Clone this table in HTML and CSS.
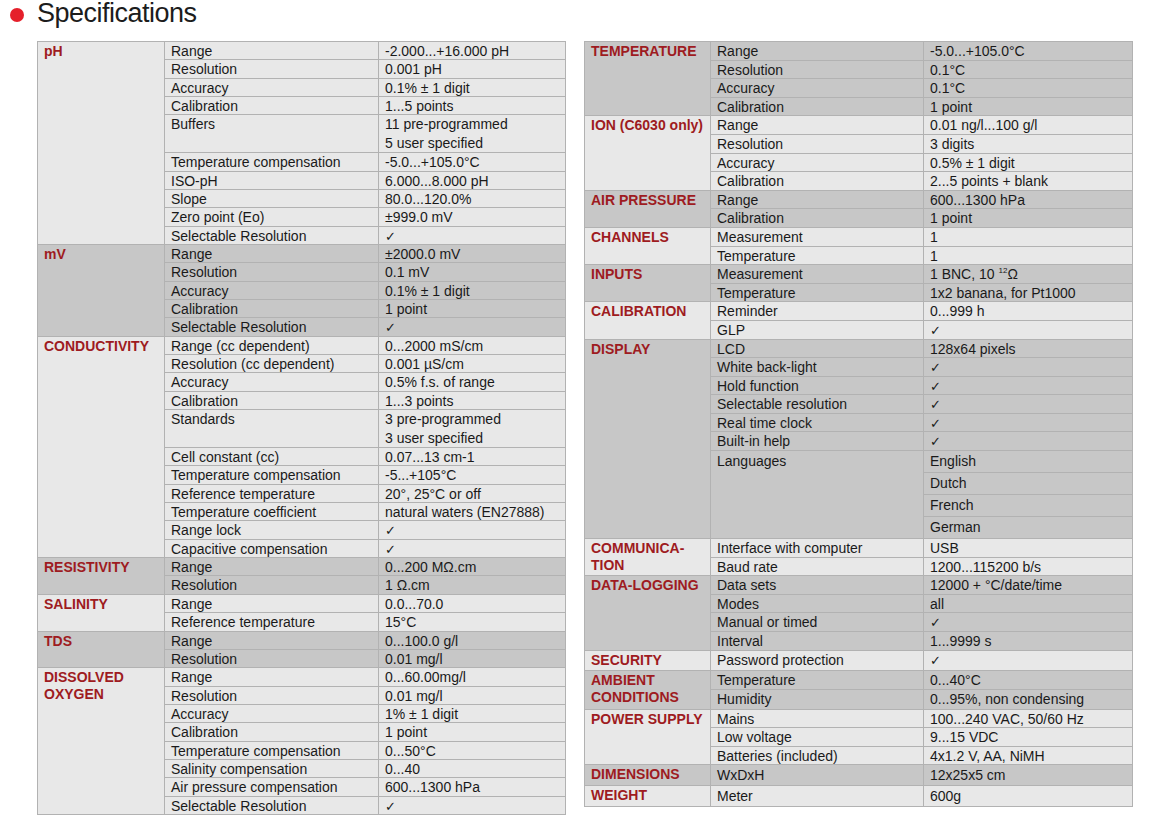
FILE: index.html
```html
<!DOCTYPE html>
<html lang="en">
<head>
<meta charset="utf-8">
<title>Specifications</title>
<link rel="stylesheet" href="styles.css">
</head>
<body>
<div class="page">
  <h2 class="title"><span class="dot"></span>Specifications</h2>
  <div class="tables">
    <div class="spec spec-left">
      <div class="band">
        <div class="g s11">pH</div>
        <div class="p">Range</div><div class="v">-2.000...+16.000 pH</div>
        <div class="p">Resolution</div><div class="v">0.001 pH</div>
        <div class="p">Accuracy</div><div class="v">0.1% ± 1 digit</div>
        <div class="p">Calibration</div><div class="v">1...5 points</div>
        <div class="p s2 two">Buffers</div><div class="v s2 two">11 pre-programmed<br>5 user specified</div>
        <div class="p">Temperature compensation</div><div class="v">-5.0...+105.0°C</div>
        <div class="p">ISO-pH</div><div class="v">6.000...8.000 pH</div>
        <div class="p">Slope</div><div class="v">80.0...120.0%</div>
        <div class="p">Zero point (Eo)</div><div class="v">±999.0 mV</div>
        <div class="p">Selectable Resolution</div><div class="v"><span class="check">✓</span></div>
      </div>
      <div class="band dark">
        <div class="g s5">mV</div>
        <div class="p">Range</div><div class="v">±2000.0 mV</div>
        <div class="p">Resolution</div><div class="v">0.1 mV</div>
        <div class="p">Accuracy</div><div class="v">0.1% ± 1 digit</div>
        <div class="p">Calibration</div><div class="v">1 point</div>
        <div class="p">Selectable Resolution</div><div class="v"><span class="check">✓</span></div>
      </div>
      <div class="band">
        <div class="g s12">CONDUCTIVITY</div>
        <div class="p">Range (cc dependent)</div><div class="v">0...2000 mS/cm</div>
        <div class="p">Resolution (cc dependent)</div><div class="v">0.001 µS/cm</div>
        <div class="p">Accuracy</div><div class="v">0.5% f.s. of range</div>
        <div class="p">Calibration</div><div class="v">1...3 points</div>
        <div class="p s2 two">Standards</div><div class="v s2 two">3 pre-programmed<br>3 user specified</div>
        <div class="p">Cell constant (cc)</div><div class="v">0.07...13 cm-1</div>
        <div class="p">Temperature compensation</div><div class="v">-5...+105°C</div>
        <div class="p">Reference temperature</div><div class="v">20°, 25°C or off</div>
        <div class="p">Temperature coefficient</div><div class="v">natural waters (EN27888)</div>
        <div class="p">Range lock</div><div class="v"><span class="check">✓</span></div>
        <div class="p">Capacitive compensation</div><div class="v"><span class="check">✓</span></div>
      </div>
      <div class="band dark">
        <div class="g s2">RESISTIVITY</div>
        <div class="p">Range</div><div class="v">0...200 MΩ.cm</div>
        <div class="p">Resolution</div><div class="v">1 Ω.cm</div>
      </div>
      <div class="band">
        <div class="g s2">SALINITY</div>
        <div class="p">Range</div><div class="v">0.0...70.0</div>
        <div class="p">Reference temperature</div><div class="v">15°C</div>
      </div>
      <div class="band dark">
        <div class="g s2">TDS</div>
        <div class="p">Range</div><div class="v">0...100.0 g/l</div>
        <div class="p">Resolution</div><div class="v">0.01 mg/l</div>
      </div>
      <div class="band">
        <div class="g s8">DISSOLVED OXYGEN</div>
        <div class="p">Range</div><div class="v">0...60.00mg/l</div>
        <div class="p">Resolution</div><div class="v">0.01 mg/l</div>
        <div class="p">Accuracy</div><div class="v">1% ± 1 digit</div>
        <div class="p">Calibration</div><div class="v">1 point</div>
        <div class="p">Temperature compensation</div><div class="v">0...50°C</div>
        <div class="p">Salinity compensation</div><div class="v">0...40</div>
        <div class="p">Air pressure compensation</div><div class="v">600...1300 hPa</div>
        <div class="p">Selectable Resolution</div><div class="v"><span class="check">✓</span></div>
      </div>
    </div>

    <div class="spec spec-right">
      <div class="band dark">
        <div class="g s4">TEMPERATURE</div>
        <div class="p">Range</div><div class="v">-5.0...+105.0°C</div>
        <div class="p">Resolution</div><div class="v">0.1°C</div>
        <div class="p">Accuracy</div><div class="v">0.1°C</div>
        <div class="p">Calibration</div><div class="v">1 point</div>
      </div>
      <div class="band">
        <div class="g s4 nowrap">ION (C6030 only)</div>
        <div class="p">Range</div><div class="v">0.01 ng/l...100 g/l</div>
        <div class="p">Resolution</div><div class="v">3 digits</div>
        <div class="p">Accuracy</div><div class="v">0.5% ± 1 digit</div>
        <div class="p">Calibration</div><div class="v">2...5 points + blank</div>
      </div>
      <div class="band dark">
        <div class="g s2">AIR PRESSURE</div>
        <div class="p">Range</div><div class="v">600...1300 hPa</div>
        <div class="p">Calibration</div><div class="v">1 point</div>
      </div>
      <div class="band">
        <div class="g s2">CHANNELS</div>
        <div class="p">Measurement</div><div class="v">1</div>
        <div class="p">Temperature</div><div class="v">1</div>
      </div>
      <div class="band dark">
        <div class="g s2">INPUTS</div>
        <div class="p">Measurement</div><div class="v">1 BNC, 10 <sup>12</sup>Ω</div>
        <div class="p">Temperature</div><div class="v">1x2 banana, for Pt1000</div>
      </div>
      <div class="band">
        <div class="g s2">CALIBRATION</div>
        <div class="p">Reminder</div><div class="v">0...999 h</div>
        <div class="p">GLP</div><div class="v"><span class="check">✓</span></div>
      </div>
      <div class="band dark">
        <div class="g s10">DISPLAY</div>
        <div class="p">LCD</div><div class="v">128x64 pixels</div>
        <div class="p">White back-light</div><div class="v"><span class="check">✓</span></div>
        <div class="p">Hold function</div><div class="v"><span class="check">✓</span></div>
        <div class="p">Selectable resolution</div><div class="v"><span class="check">✓</span></div>
        <div class="p">Real time clock</div><div class="v"><span class="check">✓</span></div>
        <div class="p">Built-in help</div><div class="v"><span class="check">✓</span></div>
        <div class="p s4 lang">Languages</div><div class="v lang">English</div>
        <div class="v lang">Dutch</div>
        <div class="v lang">French</div>
        <div class="v lang">German</div>
      </div>
      <div class="band">
        <div class="g s2">COMMUNICA-<br>TION</div>
        <div class="p">Interface with computer</div><div class="v">USB</div>
        <div class="p">Baud rate</div><div class="v">1200...115200 b/s</div>
      </div>
      <div class="band dark">
        <div class="g s4">DATA-LOGGING</div>
        <div class="p">Data sets</div><div class="v">12000 + °C/date/time</div>
        <div class="p">Modes</div><div class="v">all</div>
        <div class="p">Manual or timed</div><div class="v"><span class="check">✓</span></div>
        <div class="p">Interval</div><div class="v">1...9999 s</div>
      </div>
      <div class="band">
        <div class="g">SECURITY</div>
        <div class="p h20">Password protection</div><div class="v h20"><span class="check">✓</span></div>
      </div>
      <div class="band dark">
        <div class="g s2">AMBIENT CONDITIONS</div>
        <div class="p h195">Temperature</div><div class="v h195">0...40°C</div>
        <div class="p h195">Humidity</div><div class="v h195">0...95%, non condensing</div>
      </div>
      <div class="band">
        <div class="g s3">POWER SUPPLY</div>
        <div class="p">Mains</div><div class="v">100...240 VAC, 50/60 Hz</div>
        <div class="p">Low voltage</div><div class="v">9...15 VDC</div>
        <div class="p">Batteries (included)</div><div class="v">4x1.2 V, AA, NiMH</div>
      </div>
      <div class="band dark">
        <div class="g">DIMENSIONS</div>
        <div class="p h21">WxDxH</div><div class="v h21">12x25x5 cm</div>
      </div>
      <div class="band">
        <div class="g">WEIGHT</div>
        <div class="p h21">Meter</div><div class="v h21">600g</div>
      </div>
    </div>
  </div>
</div>
</body>
</html>
```
FILE: styles.css
```css
html, body {
  margin: 0;
  padding: 0;
  background: #ffffff;
}

body {
  font-family: "Liberation Sans", Arial, sans-serif;
  color: #1a1a1a;
}

.page {
  width: 1153px;
}

.title {
  display: flex;
  align-items: center;
  gap: 13px;
  height: 27px;
  margin: 0 0 14px;
  padding-left: 10px;
  font-size: 27px;
  line-height: 27px;
  font-weight: 400;
  letter-spacing: -0.5px;
  color: #1c1c1c;
}

.dot {
  flex: none;
  width: 14px;
  height: 14px;
  margin-top: 2px;
  border-radius: 50%;
  background: #e5202b;
}

.tables {
  display: flex;
  align-items: flex-start;
  gap: 18px;
  padding-left: 37px;
}

.spec {
  display: grid;
  grid-auto-rows: minmax(var(--row), auto);
  border-right: 1px solid #b2b2b2;
  border-bottom: 1px solid #b2b2b2;
  font-size: 14px;
}

.spec-left {
  --row: 18.36px;
  grid-template-columns: 127px 214px 187px;
}

.spec-right {
  --row: 18.6px;
  grid-template-columns: 126px 213px 209px;
}

.band {
  display: contents;
}

.band > div {
  box-sizing: border-box;
  height: 100%;
  padding: 1px 6px 0;
  border-top: 1px solid #b2b2b2;
  border-left: 1px solid #b2b2b2;
  background: #e8e8e8;
  line-height: calc(var(--row) - 2px);
  white-space: nowrap;
  overflow: hidden;
}

.band.dark > div {
  background: #c7c7c7;
}

.band > .g {
  grid-column: 1;
  color: #9e1b21;
  font-weight: 700;
  line-height: 17px;
  padding-top: 1px;
  white-space: normal;
}

.band > .nowrap {
  white-space: nowrap;
}

.p {
  grid-column: 2;
}

.v {
  grid-column: 3;
}

.band > .two {
  padding-top: 0;
  line-height: var(--row);
}

.band > .lang {
  min-height: 22px;
  padding-top: 0;
  line-height: 21px;
}

.band > .h20 {
  min-height: 20px;
  padding-top: 0;
  line-height: 19px;
}

.band > .h195 {
  min-height: 19.5px;
  padding-top: 0;
  line-height: 18.5px;
}

.band > .h21 {
  min-height: 21px;
  padding-top: 0;
  line-height: 20px;
}

.s2 { grid-row: span 2; }
.s3 { grid-row: span 3; }
.s4 { grid-row: span 4; }
.s5 { grid-row: span 5; }
.s8 { grid-row: span 8; }
.s10 { grid-row: span 10; }
.s11 { grid-row: span 11; }
.s12 { grid-row: span 12; }

.check {
  font-family: "DejaVu Sans", sans-serif;
  font-size: 13px;
  line-height: 0;
}

sup {
  font-size: 8px;
  line-height: 0;
  vertical-align: 6px;
}
```
